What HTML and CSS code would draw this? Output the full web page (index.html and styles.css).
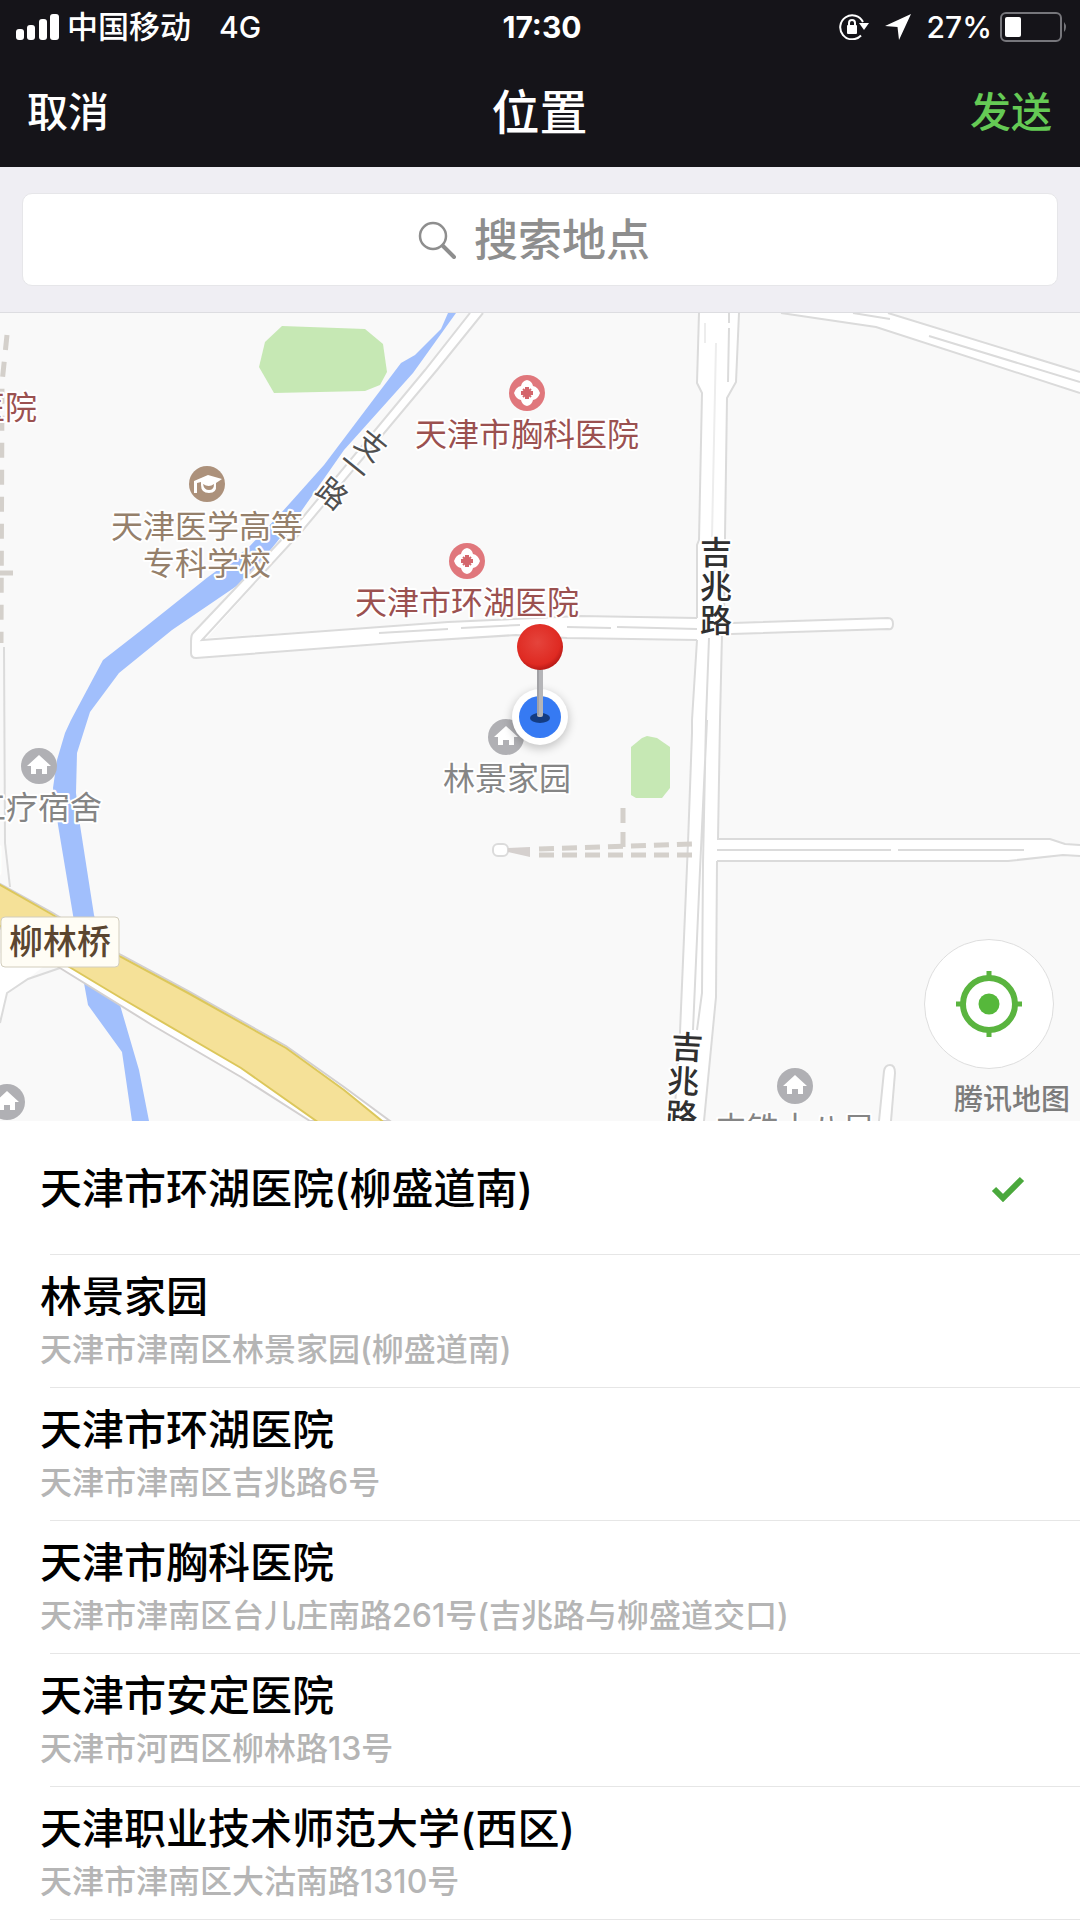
FILE: index.html
```html
<!DOCTYPE html>
<html lang="zh-CN">
<head>
<meta charset="utf-8">
<meta name="viewport" content="width=device-width, initial-scale=1">
<title>位置</title>
<link rel="stylesheet" href="styles.css">
</head>
<body>
<header class="header">
  <div class="status">
    <div class="status-side">
      <svg class="signal" viewBox="0 0 43 26" aria-hidden="true"><rect x="0" y="15" width="8" height="11" rx="3"/><rect x="11" y="11" width="8" height="15" rx="3"/><rect x="23" y="5" width="8" height="21" rx="3"/><rect x="34" y="0" width="9" height="26" rx="3"/></svg>
      <span class="carrier">中国移动</span>
      <span class="network">4G</span>
    </div>
    <time class="clock">17:30</time>
    <div class="status-side status-right">
      <svg class="lock" viewBox="0 0 30 26" aria-label="旋转锁定"><path d="M24 8A12 12 0 1 0 22 21.500" fill="none" stroke="#fff" stroke-width="2"/><path d="M20 9h10l-5 7z"/><rect x="8" y="11" width="10" height="9" rx="1"/><path d="M10 12V9a3 3 0 0 1 6 0v3" fill="none" stroke="#fff" stroke-width="2"/></svg>
      <svg class="arrow" viewBox="0 0 26 26" aria-label="定位"><path d="M26 0 14 26 12.500 13 0 12z"/></svg>
      <span class="percent">27%</span>
      <svg class="battery" viewBox="0 0 68 30" aria-label="电池"><rect x="1" y="1" width="60" height="28" rx="5" fill="none" stroke="#76767b" stroke-width="2"/><rect x="5" y="5" width="16" height="20" rx="2"/><path d="M64 10q4 5 0 10z" fill="#76767b"/></svg>
    </div>
  </div>
  <nav class="nav">
    <button class="nav-button" type="button">取消</button>
    <h1 class="nav-title">位置</h1>
    <button class="nav-button nav-send" type="button">发送</button>
  </nav>
</header>

<form class="search" role="search">
  <label class="search-box">
    <svg class="search-icon" viewBox="0 0 38 38" aria-hidden="true"><circle cx="15" cy="15" r="13" fill="none" stroke="#8e8e8e" stroke-width="2.500"/><path d="m25 25 11 11" stroke="#8e8e8e" stroke-width="4" stroke-linecap="round"/></svg>
    <input class="search-input" type="text" placeholder="搜索地点" aria-label="搜索地点">
  </label>
</form>

<main class="content">
  <section class="map" aria-label="地图">
    <svg class="map-canvas" viewBox="0 0 1080 808" preserveAspectRatio="xMidYMid slice">
      <defs>
        <g id="house"><circle r="18" fill="#b0b0b4"/><path d="M0-11-12 0h4v8h5V3h6v5h5V0h4z" fill="#fff"/></g>
        <g id="hospital"><circle r="18" fill="#e0777c"/><path d="M0-13Q5-12 6-7 11-6 13 0 11 6 6 7 5 12 0 13-5 12-6 7-11 6-13 0-11-6-6-7-5-12 0-13z" fill="#fff"/><path d="M0-6V6M-6 0H6" stroke="#d4666c" stroke-width="4"/><path d="M-4-4 4 4M4-4-4 4" stroke="#d4666c" stroke-width="2"/></g>
        <radialGradient id="pin-head" cx="45%" cy="40%" r="60%"><stop offset="0" stop-color="#e5443c"/><stop offset="0.800" stop-color="#df2a22"/><stop offset="1" stop-color="#b91a17"/></radialGradient>
        <filter id="soft" x="-50%" y="-50%" width="200%" height="200%"><feGaussianBlur stdDeviation="5"/></filter>
      </defs>

      <path class="park" d="M282 13 365 16 383 31 387 59 380 72 365 78 274 80 259 54 265 29z"/>
      <path class="park" d="M647 423 657 425 670 434V475L662 485H636L631 482V434L642 425z"/>
      <path class="river" d="M448 0 441 16 415 42 401 50 324 152 282 199 248 235 208 264 139 319 103 347 71 407 65 420 57 447 53 475 58 512 73 602 84 670 88 692 122 739 132 808H149L139 757 120 692 94 602 80 512 76 480 77 440 90 399 119 360 172 317 241 270 272 235 300 200 344 137 413 60 456 0z"/>

      <path class="road-fill" d="M470 0 425 57 303 204 193 322 191 340 195 345 420 328 516 322 567 325 697 327 697 305 580 303 448 309 207 325 303 217 437 57 483 0z"/>
      <path class="road-fill" d="M699 0 697 70 702 80 699 227 697 232 697 327 692 420 688 530 680 719 674 808H704L716 684 717 549 721 325 725 224 727 85 736 69 739 0z"/>
      <path class="road-fill" d="M724 310 888 305Q899 311 888 316L724 321z"/>
      <path class="road-fill" d="M712 526H1050L1065 531 1080 532V543L1063 542 1008 548H712z"/>
      <path class="road-fill" d="M781 0 876 14 1080 80V59L888 0z"/>
      <path class="road-fill" d="M0 640H60L28 666 7 680 0 710z"/>
      <g class="road-line">
        <path d="M470 0 425 57 303 204 193 320Q191 322 191 328V340Q191 345 196 345L420 328 516 322 567 325 697 327"/>
        <path d="M483 0 437 57 303 217 202 327 448 309 580 303 697 305"/>
        <path d="M379 320 448 316M461 315 520 312M567 314 611 315M617 314 697 316"/>
        <path d="M699 0 697 70 702 80 699 227 697 232V305M697 327 692 407V420L688 530 680 719 674 808"/>
        <path d="M739 0 736 69 727 85 725 224 724 310M722 321 720 407 718 526M717 548 716 684 704 808"/>
        <path d="M729 0V10M729 15 728 69M709 325 706 407 703 550 702 680 697 717M707 407 700 557 693 717"/>
        <path class="faint" d="M716 30 712 224M705 10V30"/>
        <path d="M732 310 888 305Q893 305 893 311T888 316L731 321"/>
        <path d="M717 526H1050L1065 531 1080 532M717 548H1008L1063 542 1080 543M717 537H891M898 537H1024"/>
        <path d="M781 0 876 14 1080 80M888 0 1080 59M929 23 1080 69M853 0 890 6"/>
        <path d="M4 334 5 530 10 574M60 655 28 666 7 680 0 710"/>
        <path d="M879 808 884 758Q885 752 890 752T895 760L891 808" fill="#fff"/>
        <rect x="493" y="531" width="15" height="12" rx="5" fill="#fff"/>
      </g>
      <g class="path-dashes">
        <path d="M539 536 695 531" stroke-dasharray="15 8"/>
        <path d="M539 542H695" stroke-dasharray="15 8"/>
        <path d="M623 495V534" stroke-dasharray="15 9"/>
        <path d="M7 22 2 70 1 330" stroke-dasharray="15 12"/>
        <path d="M0 260H13"/>
      </g>
      <path d="M508 535 530 534V544L508 539z" fill="#d5d0ce"/>

      <path d="M0 571 53 600 121 642 188 678 286 733 344 774 390 808H310L241 764 152 712 60 655 0 615z" fill="#fff" stroke="#d3d0d0" stroke-width="2"/>
      <path d="M-5 569 53 602 121 644 188 680 286 735 344 777 387 812H322L241 755 121 685 71 655-5 610z" fill="#f5e198" stroke="#dcc75b" stroke-width="2"/>

      <use href="#hospital" x="527" y="80"/>
      <use href="#hospital" x="467" y="248"/>
      <g transform="translate(207 171)"><circle r="18" fill="#ac917b"/><path d="M1-9-13-3V9h3V-1l4-1v3Q-6 9 2 9T9 1v-2l6-4z" fill="#fff"/><path d="M-4 0Q2 4 7 0 7 6 2 6T-4 0z" fill="#ac917b"/></g>
      <use href="#house" x="39" y="453"/>
      <use href="#house" x="506" y="424"/>
      <use href="#house" x="7" y="789"/>
      <use href="#house" x="795" y="773"/>

      <g class="label label-hospital">
        <text x="527" y="133">天津市胸科医院</text>
        <text x="467" y="301">天津市环湖医院</text>
        <text class="label-end" x="37" y="106">医院</text>
      </g>
      <g class="label label-school">
        <text x="207" y="225">天津医学高等</text>
        <text x="207" y="262">专科学校</text>
      </g>
      <g class="label label-home">
        <text x="507" y="477">林景家园</text>
        <text class="label-end" x="102" y="506">工疗宿舍</text>
        <text class="label-end" x="3" y="559">司</text>
        <text x="795" y="827">中铁十八局</text>
      </g>
      <g class="label label-road">
        <text x="716" y="251">吉</text><text x="716" y="285">兆</text><text x="716" y="319">路</text>
        <g transform="rotate(3 688 735)"><text x="687" y="746">吉</text><text x="685" y="780">兆</text><text x="685" y="814">路</text></g>
        <g class="label-small" transform="translate(370 134) rotate(39)"><text x="0" y="9">支</text><text x="0" y="37">一</text><text x="0" y="71">路</text></g>
      </g>
      <rect x="1" y="604" width="118" height="50" rx="4" fill="#fffdf5" stroke="#d2cdbd" stroke-width="1"/>
      <text class="bridge" x="60" y="641">柳林桥</text>

      <circle cx="540" cy="407" r="29" fill="#000" opacity="0.200" filter="url(#soft)"/>
      <circle cx="540" cy="404" r="28" fill="#fff"/>
      <circle cx="540" cy="404" r="21" fill="#367af3"/>
      <ellipse cx="540" cy="405" rx="10" ry="5" fill="#143c82"/>
      <rect x="537" y="352" width="6" height="52" rx="2" fill="#b5b5b8"/><path d="M538 354V402" stroke="#8d8d92" stroke-width="1"/>
      <circle cx="540" cy="334" r="23" fill="url(#pin-head)"/>
    </svg>
    <div class="map-tools">
      <button class="locate" type="button" aria-label="回到当前位置">
        <svg class="locate-icon" viewBox="0 0 66 66" aria-hidden="true"><circle cx="33" cy="33" r="26" fill="none" stroke="#5ab43f" stroke-width="6"/><path d="M33 0V8M33 58V66M0 33H8M58 33H66" stroke="#5ab43f" stroke-width="5"/><circle cx="33" cy="33" r="10.500" fill="#56b83b"/></svg>
      </button>
      <span class="attribution">腾讯地图</span>
    </div>
  </section>

  <ul class="places">
    <li><button class="place place-current" type="button"><span class="place-name">天津市环湖医院(柳盛道南)</span>
      <svg class="check" viewBox="0 0 34 26" aria-label="已选"><path d="M3 13 12 22 31 3" fill="none" stroke="#4aa83c" stroke-width="6"/></svg></button></li>
    <li><button class="place" type="button"><span class="place-name">林景家园</span><span class="place-address">天津市津南区林景家园(柳盛道南)</span></button></li>
    <li><button class="place" type="button"><span class="place-name">天津市环湖医院</span><span class="place-address">天津市津南区吉兆路6号</span></button></li>
    <li><button class="place" type="button"><span class="place-name">天津市胸科医院</span><span class="place-address">天津市津南区台儿庄南路261号(吉兆路与柳盛道交口)</span></button></li>
    <li><button class="place" type="button"><span class="place-name">天津市安定医院</span><span class="place-address">天津市河西区柳林路13号</span></button></li>
    <li><button class="place" type="button"><span class="place-name">天津职业技术师范大学(西区)</span><span class="place-address">天津市津南区大沽南路1310号</span></button></li>
  </ul>
</main>
</body>
</html>
```
FILE: styles.css
```css
* {
  box-sizing: border-box;
}

body {
  margin: 0;
  min-height: 100vh;
  display: flex;
  flex-direction: column;
  background: #fff;
  color: #000;
  font-family: Inter, "Noto Sans CJK SC", sans-serif;
}

button,
input {
  font: inherit;
  color: inherit;
  border: 0;
  padding: 0;
  background: none;
}

/* Header */
.header {
  background: #151419;
  color: #fff;
}

.status {
  display: grid;
  grid-template-columns: 1fr auto 1fr;
  align-items: center;
  height: 54px;
  padding: 0 12px 0 16px;
  font-size: 30px;
  font-weight: 500;
  line-height: 40px;
}

.status svg {
  fill: #fff;
}

.status-side {
  display: flex;
  align-items: center;
}

.status-right {
  justify-content: flex-end;
}

.signal {
  width: 43px;
  height: 26px;
  margin-right: 8px;
}

.carrier {
  font-size: 31px;
  margin-right: 28px;
}

.clock {
  font-weight: 700;
}

.lock {
  width: 30px;
  height: 26px;
  margin-right: 16px;
}

.arrow {
  width: 26px;
  height: 26px;
  margin-right: 16px;
}

.percent {
  margin-right: 8px;
}

.battery {
  width: 68px;
  height: 30px;
}

.nav {
  display: grid;
  grid-template-columns: 1fr auto 1fr;
  align-items: center;
  height: 113px;
  padding: 0 28px 4px 27px;
}

.nav-button {
  justify-self: start;
  font-size: 41px;
  font-weight: 500;
}

.nav-send {
  justify-self: end;
  color: #65ca55;
}

.nav-title {
  margin: 0;
  font-size: 48px;
  font-weight: 500;
}

/* Search */
.search {
  padding: 26px 22px;
  background: #efeef3;
  border-bottom: 1px solid #dddde1;
}

.search-box {
  display: flex;
  align-items: center;
  justify-content: center;
  gap: 18px;
  height: 93px;
  border: 1px solid #e6e6e9;
  border-radius: 10px;
  background: #fff;
}

.search-icon {
  width: 38px;
  height: 38px;
}

.search-input {
  width: 188px;
  height: 64px;
  font-size: 44px;
  font-weight: 500;
  outline: 0;
}

.search-input::placeholder {
  color: #8e8e8e;
  opacity: 1;
}

/* Map */
.content {
  flex: 1;
  display: flex;
  flex-direction: column;
}

.map {
  position: relative;
  flex: 1;
  min-height: 400px;
  overflow: hidden;
  background: #f9f9f9;
}

.map-canvas {
  position: absolute;
  inset: 0;
  width: 100%;
  height: 100%;
}

.park {
  fill: #c6e8b4;
}

.river {
  fill: #a1bffc;
}

.road-fill {
  fill: #fff;
}

.road-line {
  fill: none;
  stroke: #dbdbdb;
  stroke-width: 2;
}

.faint {
  stroke: #ededed;
}

.path-dashes {
  fill: none;
  stroke: #d4d0cb;
  stroke-width: 5;
}

.label {
  font-size: 32px;
  text-anchor: middle;
  stroke: #fff;
  stroke-width: 4px;
  stroke-linejoin: round;
  paint-order: stroke;
}

.label-end {
  text-anchor: end;
}

.label-hospital {
  fill: #9b5150;
}

.label-school {
  fill: #95806b;
}

.label-home {
  fill: #858585;
}

.label-road {
  fill: #303030;
  font-weight: 500;
}

.label-small {
  font-size: 30px;
  font-weight: 400;
  fill: #505050;
}

.bridge {
  font-size: 34px;
  font-weight: 500;
  text-anchor: middle;
  fill: #5b4630;
}

.map-tools {
  position: absolute;
  right: 10px;
  bottom: 2px;
  display: flex;
  flex-direction: column;
  align-items: flex-end;
  gap: 12px;
}

.locate {
  display: grid;
  place-items: center;
  width: 130px;
  height: 130px;
  margin-right: 16px;
  border: 1px solid #dedede;
  border-radius: 50%;
  background: #fff;
}

.locate-icon {
  width: 66px;
  height: 66px;
}

.attribution {
  font-size: 29px;
  font-weight: 500;
  line-height: 38px;
  color: #7c7c7c;
}

/* Places */
.places {
  margin: 0;
  padding: 0;
  list-style: none;
}

.place {
  display: flex;
  flex-direction: column;
  align-items: flex-start;
  width: 100%;
  min-height: 133px;
  padding: 14px 40px 13px;
  text-align: left;
  background: linear-gradient(#e6e6e6, #e6e6e6) 50px 100% / 100% 1px no-repeat;
}

.place-current {
  flex-direction: row;
  align-items: center;
  justify-content: space-between;
  min-height: 134px;
  padding-right: 55px;
}

.place-name {
  font-size: 42px;
  font-weight: 500;
  line-height: 56px;
}

.place-address {
  font-size: 32px;
  font-weight: 500;
  line-height: 50px;
  color: #b5b5b5;
}

.check {
  width: 34px;
  height: 26px;
}
```
